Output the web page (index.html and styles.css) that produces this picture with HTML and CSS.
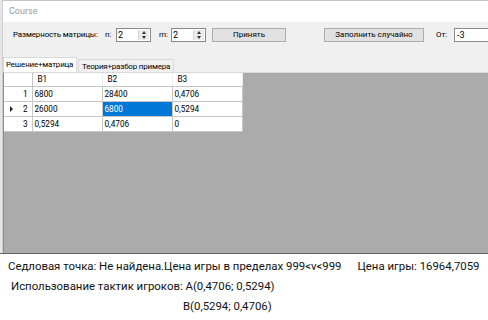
FILE: index.html
```html
<!DOCTYPE html>
<html lang="ru">
<head>
    <meta charset="UTF-8">
    <title>Course</title>
    <link rel="stylesheet" href="styles.css">
</head>
<body>
<div class="window">
    <div class="titlebar">Course</div>
    <div class="toolbar">
        <span class="caption">Размерность матрицы:</span>
        <span class="lbl lbl-n">n:</span>
        <div class="spin">
            <span class="spin-val">2</span>
            <span class="spin-btns"><i class="arr up"></i><i class="arr down"></i></span>
        </div>
        <span class="lbl lbl-m">m:</span>
        <div class="spin">
            <span class="spin-val">2</span>
            <span class="spin-btns"><i class="arr up"></i><i class="arr down"></i></span>
        </div>
        <button class="btn btn-accept">Принять</button>
        <button class="btn btn-fill">Заполнить случайно</button>
        <span class="lbl lbl-from">От:</span>
        <div class="textbox">-3</div>
    </div>
    <div class="tabs">
        <div class="tab active">Решение+матрица</div>
        <div class="tab">Теория+разбор примера</div>
    </div>
    <div class="page">
        <table class="grid">
            <tr class="head">
                <td class="rh"></td>
                <td>B1</td>
                <td>B2</td>
                <td>B3</td>
            </tr>
            <tr>
                <td class="rh">1</td>
                <td>6800</td>
                <td>28400</td>
                <td>0,4706</td>
            </tr>
            <tr>
                <td class="rh"><i class="cur"></i>2</td>
                <td>26000</td>
                <td class="sel">6800</td>
                <td>0,5294</td>
            </tr>
            <tr>
                <td class="rh">3</td>
                <td>0,5294</td>
                <td>0,4706</td>
                <td>0</td>
            </tr>
        </table>
    </div>
    <div class="results">
        <div class="line line1"><span>Седловая точка: Не найдена.Цена игры в пределах 999&lt;v&lt;999</span><span class="price">Цена игры: 16964,7059</span></div>
        <div class="line line2">Использование тактик игроков: A(0,4706; 0,5294)</div>
        <div class="line line3">B(0,5294; 0,4706)</div>
    </div>
</div>
</body>
</html>
```
FILE: styles.css
```css
html, body {
    margin: 0;
    padding: 0;
}

body {
    width: 488px;
    height: 320px;
    overflow: hidden;
    background: #e6e6e6;
    font-family: Roboto, "Liberation Sans", Arial, sans-serif;
}

.window {
    margin-left: 2px;
    height: 320px;
    box-sizing: border-box;
    border-top: 1px solid #c4c4c4;
    border-left: 1px solid #cfcfcf;
    background: #f0f0f0;
    display: flex;
    flex-direction: column;
}

.titlebar {
    height: 21px;
    line-height: 21px;
    background: #fff;
    color: #9a9a9a;
    font-size: 9px;
    padding-left: 6px;
}

/* toolbar */
.toolbar {
    height: 34px;
    box-sizing: border-box;
    padding-top: 6px;
    display: flex;
    align-items: flex-start;
    font-size: 8px;
    color: #000;
    white-space: nowrap;
}

.caption {
    margin-left: 10px;
    width: 83px;
    line-height: 14px;
    letter-spacing: -0.15px;
}

.lbl {
    line-height: 14px;
}

.lbl-n { margin-left: 9px; width: 7px; }
.lbl-m { margin-left: 8px; width: 8px; }
.lbl-from { margin-left: 12px; width: 13px; }

.spin {
    margin-left: 4px;
    width: 35px;
    height: 14px;
    box-sizing: border-box;
    border: 1px solid #8a8a8a;
    background: #fff;
    display: flex;
}

.spin-val {
    flex: 1;
    font-size: 9px;
    line-height: 12px;
    padding-left: 1px;
}

.spin-btns {
    width: 10px;
    margin: 1px;
    background: #ececec;
    border-left: 1px solid #d6d6d6;
    display: flex;
    flex-direction: column;
    align-items: center;
    justify-content: space-around;
}

.arr {
    width: 0;
    height: 0;
    border-left: 2px solid transparent;
    border-right: 2px solid transparent;
}

.arr.up { border-bottom: 3px solid #333; }
.arr.down { border-top: 3px solid #333; }

.btn {
    height: 14px;
    padding: 0;
    box-sizing: border-box;
    border: 1px solid #adadad;
    background: #e1e1e1;
    font-family: Roboto, "Liberation Sans", Arial, sans-serif;
    font-size: 8px;
    color: #000;
    line-height: 12px;
}

.btn-accept {
    margin-left: 6px;
    width: 74px;
}

.btn-fill {
    margin-left: 38px;
    width: 100px;
}

.textbox {
    margin-left: 5px;
    flex: 1;
    height: 14px;
    box-sizing: border-box;
    border: 1px solid #8a8a8a;
    border-right: 0;
    background: #fff;
    font-size: 9px;
    line-height: 12px;
    padding-left: 2px;
}

/* tabs */
.tabs {
    height: 16px;
    display: flex;
    align-items: flex-end;
    font-size: 8px;
    white-space: nowrap;
    letter-spacing: -0.2px;
}

.tab {
    height: 13px;
    line-height: 13px;
    box-sizing: border-box;
    padding: 0 3px;
    border: 1px solid #d9d9d9;
    border-bottom: 0;
    background: #f0f0f0;
    margin-left: 1px;
}

.tab.active {
    height: 15px;
    line-height: 14px;
    background: #fff;
    margin-left: 0;
    width: 74px;
    padding: 0 2px;
}

/* grid page */
.page {
    flex: 1;
    box-sizing: border-box;
    border-top: 1px solid #d9d9d9;
    border-left: 1px solid #8c8c8c;
    background: #ababab;
}

.grid {
    border-collapse: collapse;
    background: #fff;
    font-size: 8.2px;
}

.grid td {
    width: 70px;
    height: 15px;
    box-sizing: border-box;
    padding: 0 2px;
    border: 1px solid #c6c6c6;
    border-top: 0;
    border-left: 0;
    white-space: nowrap;
}

.grid .head td {
    height: 13px;
    padding-left: 5px;
    border-right-color: #f0f0f0;
}

.grid td.rh {
    width: 28px;
    text-align: right;
    padding-right: 4px;
    position: relative;
    border-right-color: #c6c6c6;
}

.grid td.sel {
    background: #0078d7;
    color: #fff;
}

.cur {
    position: absolute;
    left: 6px;
    top: 4px;
    width: 0;
    height: 0;
    border-top: 3px solid transparent;
    border-bottom: 3px solid transparent;
    border-left: 3px solid #222;
}

/* results */
.results {
    height: 67px;
    flex: none;
    box-sizing: border-box;
    margin-left: -3px;
    border-top: 1px solid #646464;
    background: #fff;
    font-size: 11.4px;
    color: #111;
    white-space: nowrap;
}

.line {
    height: 20px;
    line-height: 20px;
}

.line1 {
    margin-top: 2px;
    padding-left: 8px;
}

.price {
    margin-left: 16px;
}

.line2 {
    padding-left: 11px;
}

.line3 {
    padding-left: 183px;
}
```
